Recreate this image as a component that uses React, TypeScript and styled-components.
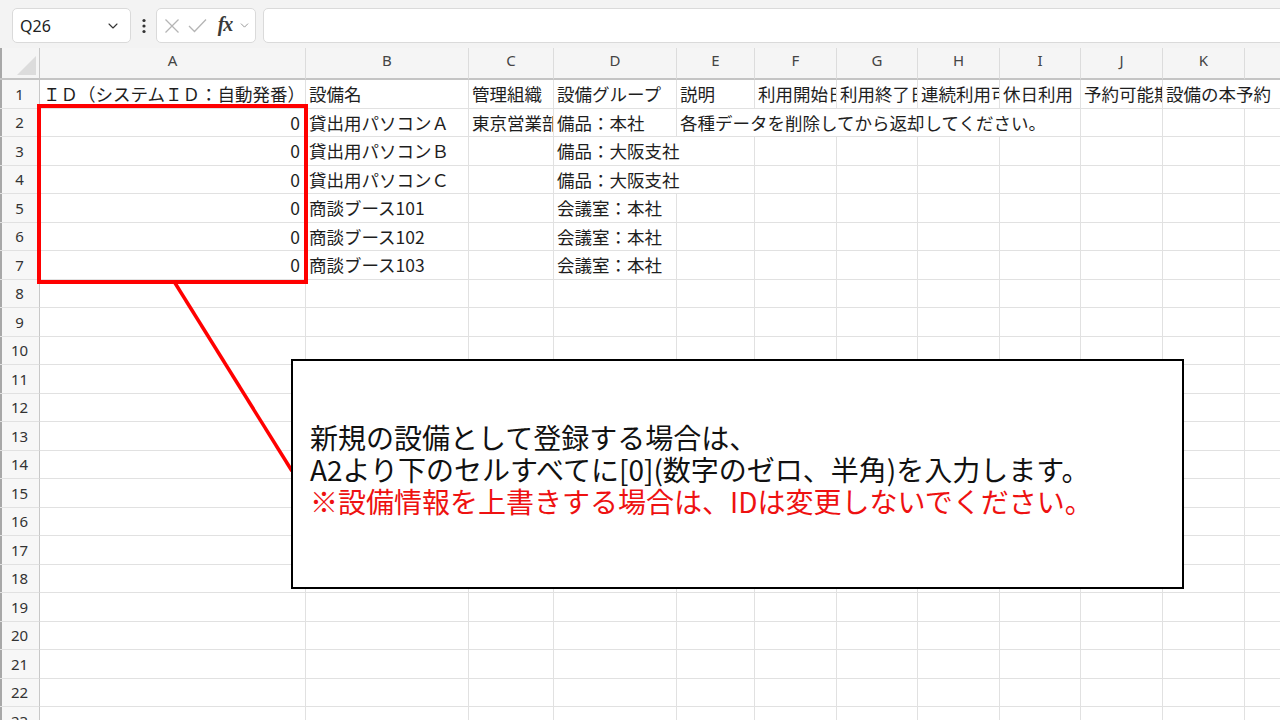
import React from 'react';
import styled, { createGlobalStyle } from 'styled-components';
import { ChevronDown } from 'lucide-react';

const CJK = `"Noto Sans CJK JP", "Noto Sans", sans-serif`;
const UI = `"Noto Sans", "Noto Sans CJK JP", sans-serif`;

const GlobalStyle = createGlobalStyle`
  html, body { margin: 0; padding: 0; width: 1280px; height: 720px; overflow: hidden; background: #fff; }
  #root { width: 1280px; height: 720px; }
  * { box-sizing: border-box; }
`;

const Page = styled.div`
  position: relative;
  width: 1280px;
  height: 720px;
  overflow: hidden;
  background: #fff;
  font-family: ${CJK};
`;

const Toolbar = styled.div`
  display: flex;
  align-items: flex-start;
  height: 48px;
  padding: 8px 0 0 12px;
  background: #f3f3f3;
`;

const NameBox = styled.div`
  width: 119px;
  height: 35px;
  background: #fff;
  border: 1px solid #dadada;
  border-radius: 5px;
  display: flex;
  align-items: center;
  justify-content: space-between;
  padding: 0 9px 0 7px;
  font-family: ${UI};
  font-size: 16px;
  color: #222;
`;

const Dots = styled.div`
  width: 25px;
  height: 35px;
  display: flex;
  align-items: center;
  justify-content: center;
  color: #333;
`;

const FxButtons = styled.div`
  width: 100px;
  height: 35px;
  background: #fff;
  border: 1px solid #dadada;
  border-radius: 5px;
  display: flex;
  align-items: center;
  padding: 0 0 0 6px;
`;

const IconSlot = styled.span<{ $w: number }>`
  width: ${(p) => p.$w}px;
  height: 35px;
  display: flex;
  align-items: center;
  justify-content: center;
  color: #b5b5b5;
`;

const Fx = styled.span`
  font-family: "Liberation Serif", serif;
  font-style: italic;
  font-weight: bold;
  font-size: 20px;
  color: #3a3a3a;
  width: 24px;
  text-align: center;
  letter-spacing: -1px;
  margin-top: -3px;
`;

const FormulaInput = styled.div`
  flex: 1;
  height: 35px;
  margin-left: 7px;
  margin-right: -10px;
  background: #fff;
  border: 1px solid #dadada;
  border-radius: 5px;
`;

const COLS = [40, 266, 163, 85, 123, 78, 82, 81, 82, 81, 82, 82, 82];
const LETTERS = ['A', 'B', 'C', 'D', 'E', 'F', 'G', 'H', 'I', 'J', 'K', 'L'];

const Sheet = styled.div`
  display: grid;
  grid-template-columns: ${COLS.map((w) => `${w}px`).join(' ')};
  grid-template-rows: 32px;
  grid-auto-rows: 28.5px;
`;

const Corner = styled.div`
  position: relative;
  background: #f5f5f5;
  border-right: 1px solid #c8c8c8;
  border-bottom: 2px solid #c4c4c4;
  box-shadow: inset 2px 0 0 #a8a8a8;
  overflow: hidden;
`;

const CornerTriangle = styled.div`
  position: absolute;
  right: 3px;
  bottom: 3px;
  width: 0;
  height: 0;
  border-left: 19px solid transparent;
  border-bottom: 19px solid #dcdcdc;
`;

const ColHeader = styled.div`
  background: #f5f5f5;
  border-right: 1px solid #dcdcdc;
  border-bottom: 2px solid #c4c4c4;
  display: flex;
  align-items: center;
  justify-content: center;
  font-family: ${UI};
  font-size: 15px;
  color: #444;
  padding-bottom: 6px;
`;

const RowHeader = styled.div`
  background: #f7f7f7;
  border-right: 1px solid #c8c8c8;
  border-bottom: 1px solid #e1e1e1;
  box-shadow: inset 2px 0 0 #a8a8a8;
  display: flex;
  align-items: center;
  justify-content: center;
  font-family: ${UI};
  font-size: 15px;
  color: #333;
`;

const Cell = styled.div<{ $span: number; $right?: boolean }>`
  grid-column: span ${(p) => p.$span};
  border-right: 1px solid #e1e1e1;
  border-bottom: 1px solid #e1e1e1;
  overflow: hidden;
  white-space: nowrap;
  display: flex;
  align-items: center;
  justify-content: ${(p) => (p.$right ? 'flex-end' : 'flex-start')};
  padding: ${(p) => (p.$right ? '0 5px 0 0' : '0 0 0 3px')};
  font-family: ${CJK};
  font-size: 17.5px;
  color: #1e1e1e;
`;

const RedBox = styled.div`
  position: absolute;
  left: 37px;
  top: 104px;
  width: 271px;
  height: 180px;
  border: 4px solid #ff0000;
  pointer-events: none;
`;

const Connector = styled.svg`
  position: absolute;
  left: 0;
  top: 0;
  width: 1280px;
  height: 720px;
  pointer-events: none;
`;

const Callout = styled.div`
  position: absolute;
  left: 291px;
  top: 359px;
  width: 893px;
  height: 230px;
  background: #fff;
  border: 2px solid #000;
  display: flex;
  flex-direction: column;
  padding: 60px 0 0 17px;
  font-family: ${CJK};
  font-size: 28px;
  line-height: 32px;
`;

const CalloutLine = styled.div<{ $red?: boolean }>`
  color: ${(p) => (p.$red ? '#ee1111' : '#111')};
  white-space: nowrap;
`;

type CellDef = { text?: string; span?: number; right?: boolean };

const rowData: Record<number, CellDef[]> = {
  1: [
    { text: 'ＩＤ（システムＩＤ：自動発番）' },
    { text: '設備名' },
    { text: '管理組織' },
    { text: '設備グループ' },
    { text: '説明' },
    { text: '利用開始日' },
    { text: '利用終了日' },
    { text: '連続利用可能日数' },
    { text: '休日利用' },
    { text: '予約可能期間' },
    { text: '設備の本予約', span: 2 },
  ],
  2: [
    { text: '0', right: true },
    { text: '貸出用パソコンＡ' },
    { text: '東京営業部' },
    { text: '備品：本社' },
    { text: '各種データを削除してから返却してください。', span: 5 },
    {},
    {},
    {},
  ],
  3: [
    { text: '0', right: true },
    { text: '貸出用パソコンＢ' },
    {},
    { text: '備品：大阪支社', span: 2 },
    {}, {}, {}, {}, {}, {}, {},
  ],
  4: [
    { text: '0', right: true },
    { text: '貸出用パソコンＣ' },
    {},
    { text: '備品：大阪支社', span: 2 },
    {}, {}, {}, {}, {}, {}, {},
  ],
  5: [
    { text: '0', right: true },
    { text: '商談ブース101' },
    {},
    { text: '会議室：本社' },
    {}, {}, {}, {}, {}, {}, {}, {},
  ],
  6: [
    { text: '0', right: true },
    { text: '商談ブース102' },
    {},
    { text: '会議室：本社' },
    {}, {}, {}, {}, {}, {}, {}, {},
  ],
  7: [
    { text: '0', right: true },
    { text: '商談ブース103' },
    {},
    { text: '会議室：本社' },
    {}, {}, {}, {}, {}, {}, {}, {},
  ],
};

const emptyRow: CellDef[] = LETTERS.map(() => ({}));

const CrossIcon = () => (
  <svg width="16" height="16" viewBox="0 0 16 16" fill="none" stroke="currentColor" strokeWidth="1.3">
    <path d="M1.5 1.5 L14.5 14.5 M14.5 1.5 L1.5 14.5" />
  </svg>
);

const CheckIcon = () => (
  <svg width="19" height="15" viewBox="0 0 19 15" fill="none" stroke="currentColor" strokeWidth="1.3">
    <path d="M1 8 L6.5 13.5 L18 1.5" />
  </svg>
);

const VDots = () => (
  <svg width="4" height="16" viewBox="0 0 4 16" fill="#333">
    <circle cx="2" cy="2.5" r="1.6" />
    <circle cx="2" cy="8" r="1.6" />
    <circle cx="2" cy="13.5" r="1.6" />
  </svg>
);

export default function App() {
  const rows = Array.from({ length: 23 }, (_, i) => i + 1);
  return (
    <Page>
      <GlobalStyle />
      <Toolbar>
        <NameBox>
          <span>Q26</span>
          <ChevronDown size={16} strokeWidth={1.6} color="#333" />
        </NameBox>
        <Dots>
          <VDots />
        </Dots>
        <FxButtons>
          <IconSlot $w={18}>
            <CrossIcon />
          </IconSlot>
          <IconSlot $w={32}>
            <CheckIcon />
          </IconSlot>
          <Fx>fx</Fx>
          <IconSlot $w={14}>
            <ChevronDown size={13} strokeWidth={1.6} color="#8a8a8a" />
          </IconSlot>
        </FxButtons>
        <FormulaInput />
      </Toolbar>
      <Sheet>
        <Corner>
          <CornerTriangle />
        </Corner>
        {LETTERS.map((l) => (
          <ColHeader key={l}>{l}</ColHeader>
        ))}
        {rows.map((r) => {
          const defs = rowData[r] ?? emptyRow;
          return (
            <React.Fragment key={r}>
              <RowHeader>{r}</RowHeader>
              {defs.map((d, i) => (
                <Cell key={i} $span={d.span ?? 1} $right={d.right}>
                  {d.text}
                </Cell>
              ))}
            </React.Fragment>
          );
        })}
      </Sheet>
      <RedBox />
      <Connector viewBox="0 0 1280 720">
        <line x1="175" y1="283" x2="292" y2="471" stroke="#ff0000" strokeWidth="3.5" />
      </Connector>
      <Callout>
        <CalloutLine>新規の設備として登録する場合は、</CalloutLine>
        <CalloutLine>A2より下のセルすべてに[0](数字のゼロ、半角)を入力します。</CalloutLine>
        <CalloutLine $red>※設備情報を上書きする場合は、IDは変更しないでください。</CalloutLine>
      </Callout>
    </Page>
  );
}
